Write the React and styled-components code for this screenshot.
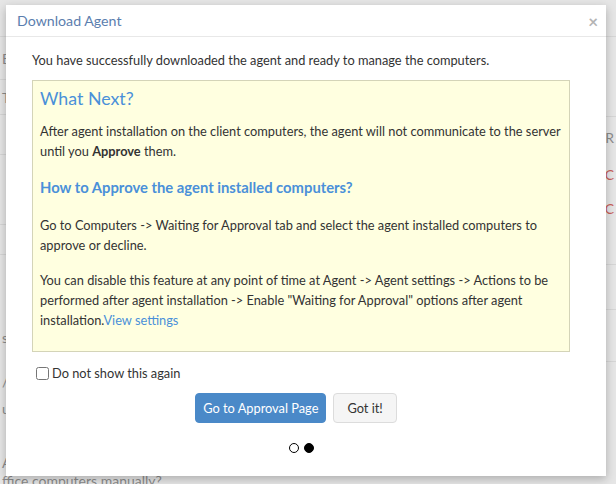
import React from 'react';
import styled, { createGlobalStyle } from 'styled-components';

const GlobalStyle = createGlobalStyle`
  html, body {
    margin: 0;
    padding: 0;
    background: #e6e6e6;
    font-family: Lato, "Open Sans", sans-serif;
  }
`;

const Page = styled.div`
  position: relative;
  width: 616px;
  height: 484px;
  overflow: hidden;
  background: #e6e6e6;
  display: grid;
  grid-template-columns: 1fr 1fr;
`;

const BackColumn = styled.div`
  display: flex;
  flex-direction: column;
`;

const BackRow = styled.div`
  height: ${(p) => p.h}px;
  flex-shrink: 0;
  width: 100%;
  box-sizing: border-box;
  border-bottom: ${(p) => (p.line ? '1px solid #d6d6d6' : 'none')};
  display: flex;
  align-items: center;
  justify-content: ${(p) => (p.right ? 'flex-end' : 'flex-start')};
  padding: 0 2px;
  font-size: 14px;
  color: ${(p) => p.color || '#8c8c8c'};
  white-space: nowrap;
`;

const Modal = styled.div`
  position: absolute;
  left: 6px;
  top: 5px;
  width: 600px;
  height: 471px;
  background: #fff;
  box-shadow: 0 3px 9px rgba(0, 0, 0, 0.25);
  display: flex;
  flex-direction: column;
`;

const Header = styled.div`
  height: 32px;
  box-sizing: border-box;
  border-bottom: 1px solid #e8e8e8;
  display: flex;
  align-items: center;
  justify-content: space-between;
  padding: 0 8px 0 11px;
`;

const Title = styled.h4`
  margin: 0;
  font-size: 14.2px;
  font-weight: 400;
  color: #5b7eae;
`;

const Close = styled.span`
  font-size: 17px;
  font-weight: 700;
  line-height: 1;
  color: #b4b4b4;
  margin-top: 1px;
`;

const Body = styled.div`
  padding: 13px 36px 0 26px;
  display: flex;
  flex-direction: column;
  font-size: 12.8px;
  color: #333;
`;

const Intro = styled.p`
  margin: 0 0 10px;
  line-height: 20px;
`;

const InfoBox = styled.div`
  background: #ffffe0;
  border: 1px solid #d4d4b8;
  padding: 6px 7px 20px 7px;
  height: 272px;
  box-sizing: border-box;
`;

const BoxTitle = styled.h3`
  margin: 0 0 12px;
  font-size: 17.8px;
  line-height: 22px;
  font-weight: 400;
  color: #4a90d9;
`;

const SubTitle = styled.h4`
  margin: 16px 0 18px;
  font-size: 14.8px;
  line-height: 20px;
  font-weight: 700;
  color: #4a90d9;
`;

const Para = styled.p`
  margin: 0 0 15px;
  line-height: 20px;
  &:last-child {
    margin-bottom: 0;
  }
`;

const Link = styled.a`
  color: #4a90d9;
  text-decoration: none;
`;

const CheckRow = styled.label`
  display: flex;
  align-items: center;
  gap: 3px;
  margin: 12px 0 0 4px;
  line-height: 18px;
`;

const Check = styled.input`
  margin: 0;
  width: 13px;
  height: 13px;
`;

const Actions = styled.div`
  display: flex;
  justify-content: center;
  gap: 7px;
  margin-top: 11px;
  padding-right: 10px;
`;

const Button = styled.button`
  height: 30px;
  padding: 0 ${(p) => (p.primary ? 7 : 13)}px;
  border-radius: 4px;
  font-family: inherit;
  font-size: 12.8px;
  border: 1px solid ${(p) => (p.primary ? '#4a89c8' : '#dcdcdc')};
  background: ${(p) => (p.primary ? '#4a89c8' : '#f5f5f5')};
  color: ${(p) => (p.primary ? '#fff' : '#333')};
`;

const Dots = styled.div`
  display: flex;
  justify-content: center;
  gap: 5px;
  margin-top: 20px;
`;

const Dot = styled.span`
  width: 8px;
  height: 8px;
  border-radius: 50%;
  border: 1px solid #000;
  background: ${(p) => (p.active ? '#000' : '#fff')};
`;

export default function App() {
  return (
    <>
      <GlobalStyle />
      <Page>
        <BackColumn>
          <BackRow h={37} line />
          <BackRow h={43} line>E</BackRow>
          <BackRow h={35} line>To</BackRow>
          <BackRow h={40} line />
          <BackRow h={70} line />
          <BackRow h={30} line />
          <BackRow h={67} />
          <BackRow h={30}>s</BackRow>
          <BackRow h={16} />
          <BackRow h={26}>/</BackRow>
          <BackRow h={28}>up</BackRow>
          <BackRow h={30} />
          <BackRow h={20}>A</BackRow>
          <BackRow h={16}>ffice computers manually?</BackRow>
        </BackColumn>
        <BackColumn>
          <BackRow h={37} line right />
          <BackRow h={80} line right />
          <BackRow h={40} right>R</BackRow>
          <BackRow h={34} right color="#c9605a">C</BackRow>
          <BackRow h={34} right color="#c9605a">C</BackRow>
          <BackRow h={40} line right />
          <BackRow h={45} line right />
          <BackRow h={52} line right />
        </BackColumn>

        <Modal>
          <Header>
            <Title>Download Agent</Title>
            <Close>×</Close>
          </Header>
          <Body>
            <Intro>You have successfully downloaded the agent and ready to manage the computers.</Intro>
            <InfoBox>
              <BoxTitle>What Next?</BoxTitle>
              <Para>
                After agent installation on the client computers, the agent will not communicate to the server
                until you <b>Approve</b> them.
              </Para>
              <SubTitle>How to Approve the agent installed computers?</SubTitle>
              <Para>
                Go to Computers -&gt; Waiting for Approval tab and select the agent installed computers to
                approve or decline.
              </Para>
              <Para>
                You can disable this feature at any point of time at Agent -&gt; Agent settings -&gt; Actions to be
                performed after agent installation -&gt; Enable "Waiting for Approval" options after agent
                installation.<Link href="#">View settings</Link>
              </Para>
            </InfoBox>
            <CheckRow>
              <Check type="checkbox" />
              Do not show this again
            </CheckRow>
            <Actions>
              <Button primary>Go to Approval Page</Button>
              <Button>Got it!</Button>
            </Actions>
            <Dots>
              <Dot />
              <Dot active />
            </Dots>
          </Body>
        </Modal>
      </Page>
    </>
  );
}
